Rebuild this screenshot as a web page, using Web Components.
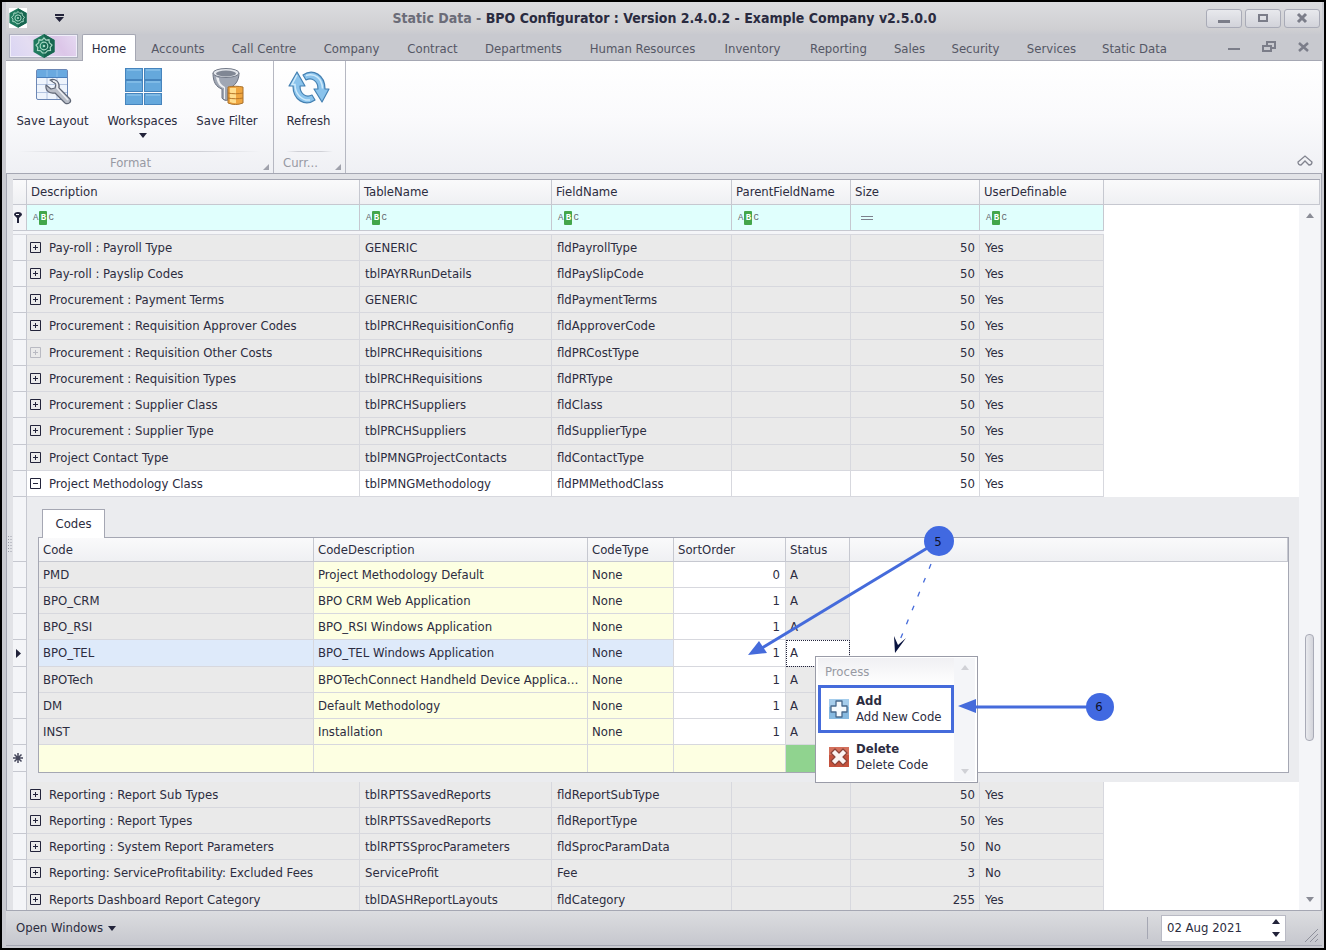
<!DOCTYPE html>
<html lang="en">
<head>
<meta charset="utf-8">
<title>Static Data - BPO Configurator</title>
<style>
  body {
    margin: 0;
    background: #000;
    color: #2c2c40;
    font: 13px/16px "DejaVu Sans Condensed", "Noto Sans", sans-serif;
  }
</style>
</head>
<body>
<app-window></app-window>

<script>
'use strict';

const RESET = `
  * { box-sizing: border-box; }
  button, input { font: inherit; color: inherit; border: 0; margin: 0; padding: 0; background: none; }
  button { cursor: pointer; }
`;

function define(name, render) {
  customElements.define(name, class extends HTMLElement {
    constructor() {
      super();
      this.attachShadow({ mode: 'open' });
    }
    connectedCallback() {
      this.shadowRoot.innerHTML = `<style>${RESET}</style>` + render(this);
    }
  });
}

define('app-logo', () => `
  <style>
    :host { display: block; width: 22px; height: 24px; }
    svg { display: block; width: 100%; height: 100%; }
  </style>
  <svg viewBox="0 0 22 24" fill="none">
    <path d="M11 0 21.500 6v12L11 24 .5 18V6z" fill="#1f7a5e"/>
    <path d="M11 0 21.500 6v12L11 24z" fill="#176650"/>
    <path d="m11 4 2 2.200 3-.4.300 3L19 11l-1.800 2.400.3 3-3 .3L12.500 19h-3l-2-2.300-3-.3.3-3L3 11l2.700-2.200.3-3 3 .4z" stroke="#a8d8c4" stroke-width="1.200"/>
    <circle cx="11" cy="12" r="3.800" stroke="#a8d8c4" stroke-width="1.200"/>
    <circle cx="11" cy="12" r="1.300" fill="#a8d8c4"/>
  </svg>
`);

define('title-bar', () => `
  <style>
    :host {
      display: grid;
      grid-template-columns: 1fr auto 1fr;
      align-items: center;
      height: 32px;
      padding: 0 2px 0 3px;
      background: linear-gradient(#dcdde0, #cfcfd2 85%, #c9cad0);
    }
    .quick { display: flex; align-items: center; gap: 28px; }
    .quick span { background: #fff; }
    .quick app-logo { width: 18px; height: 20px; }
    h1 { margin: 0; font-size: 14px; line-height: 16px; white-space: nowrap; color: #2a2b40; }
    h1 span { color: #6b6c78; }
    .buttons { display: flex; justify-content: flex-end; gap: 3px; }
    .buttons button {
      display: grid;
      place-items: center;
      width: 36px;
      height: 19px;
      border: 1px solid #a9abb7;
      border-radius: 3px;
      background: linear-gradient(#e8e9ed, #d2d3da);
    }
  </style>
  <div class="quick">
    <span><app-logo></app-logo></span>
    <button aria-label="Customize toolbar">
      <svg width="10" height="8" viewBox="0 0 10 8" fill="#22233a" style="display:block"><path d="M0 0h9v2H0zM0 3h9L4.500 8z"/></svg>
    </button>
  </div>
  <h1><span>Static Data -</span> BPO Configurator : Version 2.4.0.2 - Example Company v2.5.0.0</h1>
  <div class="buttons">
    <button aria-label="Minimize"><svg width="12" height="12"><path d="M0 8h12v3H0z" fill="#7b7d89"/></svg></button>
    <button aria-label="Maximize"><svg width="12" height="12"><path d="M2 3h8v6H2z" fill="none" stroke="#7b7d89" stroke-width="2"/></svg></button>
    <button aria-label="Close"><svg width="12" height="12"><path d="m2 2 8 8m0-8-8 8" stroke="#7b7d89" stroke-width="3"/></svg></button>
  </div>
`);

define('ribbon-tabs', () => {
  // label and tab width
  const tabs = [
    ['Home', 54], ['Accounts', 84], ['Call Centre', 88], ['Company', 87], ['Contract', 75],
    ['Departments', 107], ['Human Resources', 131], ['Inventory', 89], ['Reporting', 83],
    ['Sales', 59], ['Security', 73], ['Services', 79], ['Static Data', 87]
  ];
  return `
  <style>
    :host {
      display: flex;
      height: 27px;
      padding: 0 12px 0 3px;
      background: #c8c9cf;
      border-bottom: 1px solid #a5a7b3;
    }
    .app {
      display: grid;
      place-items: center;
      width: 69px;
      height: 24px;
      margin-right: 4px;
      box-shadow: inset 0 0 0 1px #aeb0be, inset 0 0 0 2px #f0eef9;
      background: linear-gradient(60deg, #d9d4f3, #e4ddf2 35%, #dcc6e8 70%, #e6dcf3);
    }
    nav { display: flex; flex: 1; }
    nav a {
      height: 27px;
      text-align: center;
      text-decoration: none;
      line-height: 29px;
      color: #555765;
      white-space: nowrap;
    }
    nav a.on {
      background: #fff;
      border: 1px solid #a5a7b3;
      border-bottom: 0;
      border-radius: 2px 2px 0 0;
      color: #2c2c40;
      line-height: 28px;
    }
    .mdi { display: flex; gap: 22px; align-items: center; }
    .mdi svg { display: block; }
  </style>
  <button class="app" aria-label="Application menu"><app-logo></app-logo></button>
  <nav>${tabs.map(([t, w], i) => `<a href="#" ${i ? '' : 'class="on"'} style="width:${w}px">${t}</a>`).join('')}</nav>
  <div class="mdi">
    <button aria-label="Minimize child"><svg width="12" height="12"><path d="M0 7h12v2H0z" fill="#7b7d89"/></svg></button>
    <button aria-label="Restore child"><svg width="14" height="12" fill="none" stroke="#7b7d89" stroke-width="2"><path d="M5 4V1h8v6h-3M1 5h8v5H1z"/></svg></button>
    <button aria-label="Close child"><svg width="12" height="12"><path d="m1 2 9 8m0-8-9 8" stroke="#7b7d89" stroke-width="2.500"/></svg></button>
  </div>`;
});

const ICONS = {
  layout: `
    <rect x="1.500" y="1.500" width="31" height="30" rx="1.500" fill="#eef4fc" stroke="#6c87b5"/>
    <path d="M2 2h30v7H2z" fill="#69a9e0"/>
    <path d="M2 9.500h30" stroke="#4a7fbd"/>
    <path d="M2 16.500h30M2 24.500h30M12 10v21M22 10v21" stroke="#b3c4e0"/>
    <path d="M12 2v7M22 2v7" stroke="#8fc0ea"/>
    <path d="M15 12c5-2 10 2 9 8l11 11c2 3-2 6-5 4L20 25c-5 1-10-2-9-8l5 4 4-1 1-4z" fill="#b9bec8" stroke="#5f6675" stroke-width="1.200" stroke-linejoin="round"/>
    <path d="M18 13c4 0 5 4 4 7l11 12" fill="none" stroke="#eceef2" stroke-width="1.500"/>`,
  workspaces: [0, 12, 25].map(y => [0, 19].map(x =>
    `<rect x="${x + .5}" y="${y + .5}" width="17" height="11" fill="#65a8dc" stroke="#4684bd"/><path d="M${x + 2} ${y + 2}h14" stroke="#9accef"/>`).join('')).join(''),
  filter: `
    <path d="M4 5c0 9 3 14 9 16v9c1 2 4 3 6 2V21c7-3 11-8 11-16z" fill="#a0a7b4" stroke="#6a7180"/>
    <path d="M7 9c1 6 4 10 8 11v11h1V19c-4-2-6-5-6-9z" fill="#eef0f3"/>
    <ellipse cx="17" cy="5" rx="13" ry="4.500" fill="#e3e6eb" stroke="#737a88"/>
    <ellipse cx="17" cy="5.500" rx="10" ry="3" fill="#808794"/>
    <path d="M19 19c5-1 10-1 15 0v16c-5 2-10 2-15 0z" fill="#f0a640" stroke="#a8712c"/>
    <path d="M21 20h6v15c-2 0-4 0-6-1z" fill="#ffdd8d"/>
    <path d="M19 25c5 1 10 1 15 0M19 30c5 1 10 1 15 0" fill="none" stroke="#b57426"/>`,
  refresh: `
    <g fill="#8ac3ec" stroke="#4480b2" stroke-width="1.200" stroke-linejoin="round">
      <path d="M15 6C25-1 37 6 37 20h4l-7 13-8-13h4c0-8-6-12-12-9z"/>
      <path d="M27 31C17 38 5 31 5 17H1L9 3l8 14h-5c0 8 6 12 12 9z"/>
    </g>
    <path d="M18 6.500c9-3 16 3 16.500 13M9 6l-5 9.500h3C7 25 14 32 22 31" fill="none" stroke="#cdeafb" stroke-width="1.500"/>`
};

define('ribbon-button', el => `
  <style>
    :host { display: block; }
    button {
      display: flex;
      flex-direction: column;
      align-items: center;
      width: 100%;
      height: 84px;
      padding-top: 7px;
      white-space: nowrap;
    }
    .icon { display: block; flex: none; overflow: visible; }
    .label { margin-top: 8px; }
    .drop { margin-top: 4px; }
  </style>
  <button>
    <svg class="icon" width="40" height="37" viewBox="${el.getAttribute('box') || '-2 0 40 37'}">${ICONS[el.getAttribute('icon')]}</svg>
    <span class="label"><slot></slot></span>
    ${el.hasAttribute('drop') ? '<svg class="drop" width="8" height="5"><path d="M0 0h8L4 5z" fill="#22233a"/></svg>' : ''}
  </button>
`);

define('ribbon-group', el => `
  <style>
    :host {
      display: flex;
      flex-direction: column;
      justify-content: space-between;
      border-right: 1px solid #b6b8c2;
    }
    .buttons { display: flex; }
    .caption {
      position: relative;
      height: 22px;
      padding: 2px 18px 0 0;
      text-align: center;
      line-height: 20px;
      color: #9799a3;
    }
    .caption::before {
      content: "";
      position: absolute;
      inset: 0 12px auto;
      height: 1px;
      background: linear-gradient(90deg, transparent, #cfd0d6 25%, #cfd0d6 75%, transparent);
    }
    svg { position: absolute; right: 4px; bottom: 3px; }
  </style>
  <div class="buttons"><slot></slot></div>
  <div class="caption">${el.getAttribute('caption')}<svg width="6" height="6"><path d="M6 0v6H0z" fill="#a0a2ac"/></svg></div>
`);

define('ribbon-panel', () => `
  <style>
    :host {
      display: flex;
      height: 113px;
      background: linear-gradient(#fff, #fafafc 50%, #eff0f4);
      border-bottom: 1px solid #a5a7b3;
    }
    .format { width: 268px; }
    .current { width: 72px; }
    .wide { width: 93px; }
    .mid { width: 87px; }
    .slim { width: 82px; }
    .narrow { width: 69px; }
    .collapse { margin: auto 8px 5px auto; }
    .collapse svg { display: block; }
  </style>
  <ribbon-group class="format" caption="Format">
    <ribbon-button class="wide" icon="layout">Save Layout</ribbon-button>
    <ribbon-button class="mid" icon="workspaces" drop>Workspaces</ribbon-button>
    <ribbon-button class="slim" icon="filter">Save Filter</ribbon-button>
  </ribbon-group>
  <ribbon-group class="current" caption="Curr...">
    <ribbon-button class="narrow" icon="refresh" box="1 -1 40 37">Refresh</ribbon-button>
  </ribbon-group>
  <button class="collapse" aria-label="Collapse ribbon">
    <svg width="18" height="14" fill="none" stroke="#82848f" stroke-width="1.300"><path d="m2 8 7-6 7 6c0 3-2 3-3 3L9 7l-4 4C3 11 2 10 2 8z"/></svg>
  </button>
`);

const COMMON_TABLE = `
  table { width: 100%; border-collapse: separate; border-spacing: 0; table-layout: fixed; }
  th, td {
    height: 26px;
    padding: 0 5px;
    border: 0 solid #d7d8de;
    border-width: 0 1px 1px 0;
    overflow: hidden;
    text-align: left;
    text-overflow: ellipsis;
    white-space: nowrap;
    font-weight: normal;
    vertical-align: middle;
  }
  tbody tr:nth-child(4n) > td { height: 27px; }
  thead th { height: 25px; padding: 0 4px; background: linear-gradient(#fafafb, #eff0f3); border-color: #c6c8d0; }
  .num { text-align: right; padding-right: 4px; }
`;

define('detail-grid', () => {
  const rows = [
    ['PMD', 'Project Methodology Default', 0],
    ['BPO_CRM', 'BPO CRM Web Application', 1],
    ['BPO_RSI', 'BPO_RSI Windows Application', 1],
    ['BPO_TEL', 'BPO_TEL Windows Application', 1],
    ['BPOTech', 'BPOTechConnect Handheld Device Application', 1],
    ['DM', 'Default Methodology', 1],
    ['INST', 'Installation', 1]
  ];
  const marks = {
    3: '<svg width="5" height="9"><path d="m0 0 5 4.500L0 9z" fill="#22233a"/></svg>',
    7: '<svg width="10" height="10" stroke="#44465a" stroke-width="1.500"><path d="M5 0v10M0 5h10M1.500 1.500l7 7m0-7-7 7"/></svg>'
  };
  return `
  <style>
    ${COMMON_TABLE}
    :host { display: grid; grid-template-columns: 14px 1fr; height: 285px; background: #ebecef; }
    .rail { display: flex; flex-direction: column; border-right: 1px solid #c6c8d0; background: #f4f5f8; }
    .rail div { display: grid; flex: none; place-items: center; height: 26px; padding-right: 3px; border-bottom: 1px solid #c6c8d0; }
    .rail div:nth-child(4n + 1) { height: 27px; }
    .rail div:first-child { height: 65px; }
    .rail div:last-child { flex: 1; height: auto; }
    .pane { padding: 12px 31px 9px 11px; border-bottom: 1px solid #d7d8de; }
    .tab {
      display: block;
      width: 63px;
      height: 29px;
      margin: 0 0 -1px 4px;
      position: relative;
      border: 1px solid #a5a7b3;
      border-bottom: 0;
      background: #fff;
    }
    .box { border: 1px solid #a5a7b3; background: #fff; }
    thead th { height: 24px; }
    td { padding: 0 4px; background: #eaeaea; }
    td.edit { background: #fdffe2; }
    td.num { background: #fff; padding-right: 5px; }
    td.rest { background: #fff; border: 0; }
    tr.sel td { background: #deeafa; }
    tr.sel td.num, tr.sel td.status, tr.sel td.rest { background: #fff; }
    tr.sel td.status { outline: 1px dotted #22233a; outline-offset: -1px; }
    tr.new td { background: #fdffe2; border-bottom: 0; }
    tr.new td.status { background: #90d38f; }
    tr.new td.rest { background: #fff; }
  </style>
  <div class="rail"><div></div>${[0, 1, 2, 3, 4, 5, 6, 7].map(i => `<div>${marks[i] || ''}</div>`).join('')}<div></div></div>
  <div class="pane">
    <button class="tab">Codes</button>
    <div class="box">
    <table>
      <colgroup><col style="width:275px"><col style="width:274px"><col style="width:86px"><col style="width:112px"><col style="width:64px"><col></colgroup>
      <thead><tr><th>Code</th><th>CodeDescription</th><th>CodeType</th><th>SortOrder</th><th>Status</th><th></th></tr></thead>
      <tbody>
        ${rows.map(([code, text, order]) => `
        <tr${code === 'BPO_TEL' ? ' class="sel"' : ''}>
          <td>${code}</td><td class="edit">${text}</td><td class="edit">None</td><td class="num">${order}</td><td class="status">A</td><td class="rest"></td>
        </tr>`).join('')}
        <tr class="new"><td></td><td></td><td></td><td></td><td class="status"></td><td class="rest"></td></tr>
      </tbody>
    </table>
    </div>
  </div>`;
});

define('text-filter', el => `
  <style>
    :host { display: flex; align-items: center; height: 20px; }
    .abc { display: flex; align-items: center; flex: none; padding-left: 2px; font: 9px/12px "Liberation Mono", monospace; color: #63666f; }
    .abc b { width: 8px; height: 14px; margin: 0 1px; border-radius: 1px; background: #43a64a; color: #fff; text-align: center; line-height: 14px; }
    svg { flex: none; margin-left: 6px; }
    input { min-width: 0; flex: 1; outline: 0; }
  </style>
  ${el.getAttribute('kind') === 'number'
    ? '<svg width="12" height="6"><path d="M0 1h12v1H0zM0 4h12v1H0z" fill="#7d808c"/></svg>'
    : '<span class="abc">A<b>B</b>C</span>'}
  <input aria-label="Filter ${el.getAttribute('field')}">
`);

define('data-grid', () => {
  const top = [
    ['Pay-roll : Payroll Type', 'GENERIC', 'fldPayrollType', 50, 'Yes'],
    ['Pay-roll : Payslip Codes', 'tblPAYRRunDetails', 'fldPaySlipCode', 50, 'Yes'],
    ['Procurement : Payment Terms', 'GENERIC', 'fldPaymentTerms', 50, 'Yes'],
    ['Procurement : Requisition Approver Codes', 'tblPRCHRequisitionConfig', 'fldApproverCode', 50, 'Yes'],
    ['Procurement : Requisition Other Costs', 'tblPRCHRequisitions', 'fldPRCostType', 50, 'Yes', 'dim'],
    ['Procurement : Requisition Types', 'tblPRCHRequisitions', 'fldPRType', 50, 'Yes'],
    ['Procurement : Supplier Class', 'tblPRCHSuppliers', 'fldClass', 50, 'Yes'],
    ['Procurement : Supplier Type', 'tblPRCHSuppliers', 'fldSupplierType', 50, 'Yes'],
    ['Project Contact Type', 'tblPMNGProjectContacts', 'fldContactType', 50, 'Yes'],
    ['Project Methodology Class', 'tblPMNGMethodology', 'fldPMMethodClass', 50, 'Yes', 'open']
  ];
  const bottom = [
    ['Reporting : Report Sub Types', 'tblRPTSSavedReports', 'fldReportSubType', 50, 'Yes'],
    ['Reporting : Report Types', 'tblRPTSSavedReports', 'fldReportType', 50, 'Yes'],
    ['Reporting : System Report Parameters', 'tblRPTSSprocParameters', 'fldSprocParamData', 50, 'No'],
    ['Reporting: ServiceProfitability: Excluded Fees', 'ServiceProfit', 'Fee', 3, 'No'],
    ['Reports Dashboard Report Category', 'tblDASHReportLayouts', 'fldCategory', 255, 'Yes']
  ];
  const fields = ['Description', 'TableName', 'FieldName', 'ParentFieldName', 'Size', 'UserDefinable'];
  const row = ([desc, table, field, size, user, state = '']) => `
    <tr class="${state}">
      <td class="ind"></td>
      <td class="desc"><button aria-label="${state === 'open' ? 'Collapse' : 'Expand'}"><svg width="11" height="11" fill="none" stroke="currentColor"><path d="M.5.5h10v10H.5zM3 5.500h5${state === 'open' ? '' : 'M5.500 3v5'}"/></svg></button>${desc}</td>
      <td>${table}</td><td>${field}</td><td></td><td class="num">${size}</td><td>${user}</td><td class="rest"></td>
    </tr>`;
  return `
  <style>
    ${COMMON_TABLE}
    :host {
      display: block;
      position: relative;
      overflow: hidden;
      border-top: 1px solid #a5a7b3;
      background: #fff;
    }
    td { background: #eaeaea; }
    tr.open td { background: #fff; }
    td.ind, tr.open td.ind { padding: 0; background: #f4f5f8; border-color: #c6c8d0; }
    td.ind svg { display: block; margin-left: 1px; }
    td.rest, tr.open td.rest { background: #fff; border: 0; }
    td.desc { padding-left: 3px; }
    td.desc button { margin-right: 8px; color: #22233a; vertical-align: -1px; }
    td.desc svg { display: block; }
    tr.dim button { color: #b9bac2; }
    tr.filter td { background: #e0fffd; padding: 0 4px; border-color: #c6c8d0; }
    tr.filter td.ind { background: #f4f5f8; padding: 0; }
    tr.filter td.rest { background: #fff; }
    tr.gap td { height: 4px; padding: 0; background: #f4f5f8; border-right: 0; line-height: 1px; }
    tr.gap td.rest { background: #fff; }
    td.child { height: 285px; padding: 0; border: 0; }
    .scroll {
      position: absolute;
      inset: 25px 0 0 auto;
      display: flex;
      flex-direction: column;
      align-items: center;
      justify-content: space-between;
      width: 21px;
      padding: 8px 0;
      background: #f4f5f8;
    }
    .scroll svg { display: block; }
    .track { display: flex; flex-direction: column; flex: 1; }
    .track::before { content: ""; flex: 72; }
    .track::after { content: ""; flex: 27; }
    .thumb { width: 9px; height: 107px; border: 1px solid #a9abb7; border-radius: 4px; background: linear-gradient(90deg, #e9eaee, #d3d4db); }
  </style>
  <table>
    <colgroup><col style="width:14px"><col style="width:333px"><col style="width:192px"><col style="width:180px"><col style="width:119px"><col style="width:129px"><col style="width:124px"><col></colgroup>
    <thead>
      <tr><th></th>${fields.map(f => `<th>${f}</th>`).join('')}<th></th></tr>
      <tr class="filter">
        <td class="ind"><svg width="8" height="11" fill="#22233a"><path d="M0 3a4 3 0 0 1 8 0L5 6v5H3V6z"/><path d="M2 2h3v1H2z" fill="#fff"/></svg></td>
        ${fields.map(f => `<td><text-filter field="${f}" kind="${f === 'Size' ? 'number' : 'text'}"></text-filter></td>`).join('')}
        <td class="rest"></td>
      </tr>
      <tr class="gap"><td colspan="7"></td><td class="rest"></td></tr>
    </thead>
    <tbody>${top.map(row).join('')}</tbody>
    <tbody><tr><td class="child" colspan="8"><detail-grid></detail-grid></td></tr></tbody>
    <tbody>${bottom.map(row).join('')}</tbody>
  </table>
  <div class="scroll">
    <button aria-label="Scroll up"><svg width="8" height="5"><path d="m0 5 4-5 4 5z" fill="#8a8c96"/></svg></button>
    <div class="track"><div class="thumb"></div></div>
    <button aria-label="Scroll down"><svg width="8" height="5"><path d="m0 0 4 5 4-5z" fill="#8a8c96"/></svg></button>
  </div>`;
});

define('menu-entry', el => `
  <style>
    :host { display: block; }
    button {
      display: flex;
      align-items: center;
      gap: 7px;
      width: 100%;
      height: 48px;
      padding: 0 8px;
      border: 3px solid transparent;
      text-align: left;
      white-space: nowrap;
    }
    :host([marked]) button { border-color: #456bdb; background: #fff; }
    svg { flex: none; }
    b, span { display: block; }
  </style>
  <button>
    ${el.getAttribute('icon') === 'add' ? `
    <svg width="20" height="20"><path d="M0 0h20v20H0z" fill="#86b9e0"/><path d="M0 0h20v8H0z" fill="#a5cdec"/><path d="M7 2h6v5h5v6h-5v5H7v-5H2V7h5z" fill="#f5fafe" stroke="#47698d" stroke-width="1.300" stroke-linejoin="round"/></svg>` : `
    <svg width="20" height="20"><path d="M0 0h20v20H0z" fill="#c4513d"/><path d="M0 0h20v8H0z" fill="#d3705c"/><path d="m6 2 4 4 4-4 4 4-4 4 4 4-4 4-4-4-4 4-4-4 4-4-4-4z" fill="#fbf4f3" stroke="#8c4339" stroke-width="1.200" stroke-linejoin="round"/></svg>`}
    <span><b>${el.getAttribute('label')}</b><slot></slot></span>
  </button>
`);

define('popup-menu', () => `
  <style>
    :host {
      display: grid;
      grid-template-columns: 1fr 21px;
      width: 163px;
      border: 1px solid #9a9ca8;
      background: #fff;
      padding: 1px 2px;
    }
    h2 {
      margin: 0;
      height: 27px;
      padding-left: 7px;
      background: linear-gradient(#f0f0f3, #fff);
      font-size: 13px;
      font-weight: normal;
      line-height: 27px;
      color: #9799a3;
    }
    .bar { display: flex; flex-direction: column; justify-content: space-between; align-items: center; padding: 7px 0; background: #f4f5f8; }
  </style>
  <div>
    <h2>Process</h2>
    <menu-entry icon="add" label="Add" marked>Add New Code</menu-entry>
    <menu-entry icon="delete" label="Delete">Delete Code</menu-entry>
  </div>
  <div class="bar">
    <svg width="8" height="5"><path d="m0 5 4-5 4 5z" fill="#d0d1d6"/></svg>
    <svg width="8" height="5"><path d="m0 0 4 5 4-5z" fill="#d0d1d6"/></svg>
  </div>
`);

// numbered pins and the arrows that lead from them
define('call-outs', () => `
  <style>
    :host { display: block; pointer-events: none; }
    svg { display: block; }
    text { font-size: 13px; fill: #10122a; text-anchor: middle; }
  </style>
  <svg width="400" height="210" viewBox="740 520 400 210">
    <path d="M939 541 762 648" stroke="#456bdb" stroke-width="3"/>
    <path d="m748 655 11-14 8 12z" fill="#456bdb"/>
    <path d="m931 564-31 76" stroke="#456bdb" stroke-width="1.300" stroke-dasharray="5 10"/>
    <path d="m895 653-1-17 4 9 8-7z" fill="#0a1440"/>
    <path d="M1100 707H973" stroke="#456bdb" stroke-width="3"/>
    <path d="m958 706 18-7v14z" fill="#456bdb"/>
    <circle cx="939" cy="541" r="15" fill="#4169e1"/>
    <circle cx="1100" cy="707" r="14" fill="#4169e1"/>
    <text x="938" y="546">5</text>
    <text x="1099" y="711">6</text>
  </svg>
`);

define('status-bar', () => `
  <style>
    :host {
      display: flex;
      align-items: center;
      height: 36px;
      padding: 0 3px 0 10px;
      border-top: 1px solid #a5a7b3;
      border-bottom: 1px solid #a5a7b3;
      background: linear-gradient(#dcdde0, #c6c7ce);
    }
    .open { display: flex; align-items: center; gap: 5px; margin-right: auto; }
    .rule { width: 1px; height: 22px; margin-right: 13px; background: #a5a7b3; }
    .date { display: flex; align-items: center; width: 125px; height: 27px; border: 1px solid #b9bac4; background: #fff; }
    input { flex: 1; min-width: 0; padding-left: 5px; }
    .spin { display: flex; flex-direction: column; gap: 8px; margin-right: 5px; }
    .spin svg, .grip { display: block; }
    .grip { align-self: flex-end; margin: 0 0 3px 19px; }
  </style>
  <button class="open">Open Windows <svg width="8" height="5"><path d="M0 0h8L4 5z" fill="#22233a"/></svg></button>
  <span class="rule"></span>
  <div class="date">
    <input aria-label="Date" value="02 Aug 2021">
    <div class="spin">
      <button aria-label="Later"><svg width="8" height="5"><path d="m0 5 4-5 4 5z" fill="#22233a"/></svg></button>
      <button aria-label="Earlier"><svg width="8" height="5"><path d="m0 0 4 5 4-5z" fill="#22233a"/></svg></button>
    </div>
  </div>
  <svg class="grip" width="14" height="14" stroke="#8e909b"><path d="M0 14 13 1M5 14l8-8M10 14l3-3"/></svg>
`);

define('app-window', () => `
  <style>
    :host {
      display: flex;
      flex-direction: column;
      position: relative;
      height: 100vh;
      box-sizing: border-box;
      overflow: hidden;
      border: 2px solid #000;
    }
    .frame { display: flex; flex: 1; flex-direction: column; min-height: 0; padding: 0 2px 2px 4px; background: #c9cad0; }
    .work {
      display: flex;
      flex: 1;
      min-height: 0;
      padding: 5px 1px 0 0;
      border-left: 1px solid #a5a7b3;
      border-right: 1px solid #a5a7b3;
      background: #e2e3e7;
    }
    .split { display: grid; align-items: center; width: 6px; }
    data-grid { flex: 1; min-width: 0; }
    popup-menu { position: absolute; left: 813px; top: 654px; }
    call-outs { position: absolute; left: 738px; top: 518px; }
  </style>
  <div class="frame">
    <title-bar></title-bar>
    <ribbon-tabs></ribbon-tabs>
    <ribbon-panel></ribbon-panel>
    <div class="work">
      <div class="split"><svg width="5" height="17"><path d="M1.500 0v17M4 0v17" stroke="#9a9ca8" stroke-dasharray="1 2"/></svg></div>
      <data-grid></data-grid>
    </div>
    <status-bar></status-bar>
  </div>
  <popup-menu></popup-menu>
  <call-outs></call-outs>
`);
</script>
</body>
</html>
